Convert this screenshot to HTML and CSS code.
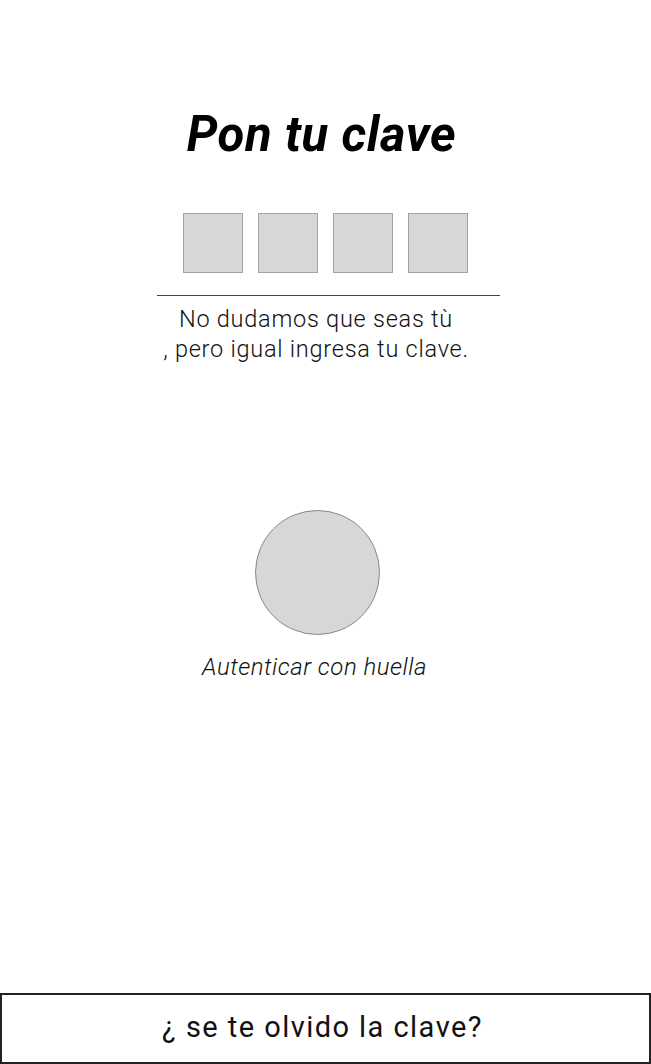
FILE: index.html
```html
<!DOCTYPE html>
<html lang="es">
<head>
<meta charset="utf-8">
<title>Pon tu clave</title>
<link rel="stylesheet" href="styles.css">
</head>
<body>
<main class="screen">
  <h1 class="title">Pon tu clave</h1>
  <div class="pin">
    <div class="pin-box"></div>
    <div class="pin-box"></div>
    <div class="pin-box"></div>
    <div class="pin-box"></div>
  </div>
  <div class="divider"></div>
  <p class="hint">No dudamos que seas tù<br>, pero igual ingresa tu clave.</p>
  <div class="finger"></div>
  <p class="finger-label">Autenticar con huella</p>
  <div class="spacer"></div>
  <button class="forgot">¿ se te olvido la clave?</button>
</main>
</body>
</html>
```
FILE: styles.css
```css
* { box-sizing: border-box; }
html, body { margin: 0; padding: 0; background: #fff; }
body { font-family: Roboto, "Liberation Sans", sans-serif; color: #111; }
.screen {
  width: 651px;
  height: 1064px;
  display: flex;
  flex-direction: column;
  align-items: center;
}
.title {
  margin: 106px 0 0 -8px;
  font-size: 49px;
  font-weight: 700;
  font-style: italic;
  line-height: 58px;
  color: #000;
  letter-spacing: 0.6px;
}
.pin {
  margin-top: 49px;
  display: flex;
  gap: 15px;
}
.pin-box {
  width: 60px;
  height: 60px;
  background: #d9d6d6;
  border: 1px solid #a4a2a2;
}
.divider {
  margin-top: 22px;
  width: 343px;
  height: 1px;
  background: #444;
  margin-left: 6px;
}
.hint {
  margin: 8px 0 0 -19px;
  font-size: 23.5px;
  font-weight: 300;
  line-height: 30px;
  letter-spacing: 0.75px;
  text-align: center;
  color: #111;
}
.finger {
  margin-top: 146px;
  width: 125px;
  height: 125px;
  border-radius: 50%;
  background: #d9d6d6;
  border: 1px solid #888;
  margin-left: -16px;
}
.finger-label {
  margin: 17px 0 0 -22px;
  font-size: 24px;
  font-weight: 300;
  font-style: italic;
  line-height: 30px;
  letter-spacing: 0.5px;
  color: #111;
}
.spacer { flex: 1; }
.forgot {
  width: 651px;
  height: 71px;
  background: #fff;
  border: 2px solid #222;
  font-family: Roboto, "Liberation Sans", sans-serif;
  font-size: 29px;
  font-weight: 400;
  letter-spacing: 1.45px;
  color: #111;
  padding: 0 6px 4px 0;
  cursor: pointer;
}
```
